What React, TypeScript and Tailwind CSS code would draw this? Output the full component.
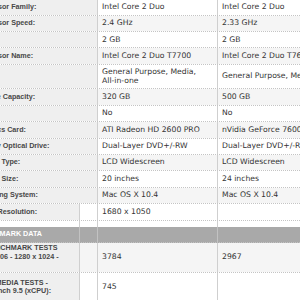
import React from 'react';

// Spec comparison sheet: one label column and two machine columns
interface SpecRow { label: string; a: string; b: string; tall?: boolean; }
interface BenchRow { lines: string[]; a: string; b: string; h: string; shaded?: boolean; }

const specs: SpecRow[] = [
  { label: 'Processor Family:', a: 'Intel Core 2 Duo', b: 'Intel Core 2 Duo' },
  { label: 'Processor Speed:', a: '2.4 GHz', b: '2.33 GHz' },
  { label: 'RAM:', a: '2 GB', b: '2 GB' },
  { label: 'Processor Name:', a: 'Intel Core 2 Duo T7700', b: 'Intel Core 2 Duo T7600' },
  { label: 'Type:', a: 'General Purpose, Media,\nAll-in-one', b: 'General Purpose, Media', tall: true },
  { label: 'Storage Capacity:', a: '320 GB', b: '500 GB' },
  { label: 'SSD:', a: 'No', b: 'No' },
  { label: 'Graphics Card:', a: 'ATI Radeon HD 2600 PRO', b: 'nVidia GeForce 7600 GT' },
  { label: 'Primary Optical Drive:', a: 'Dual-Layer DVD+/-RW', b: 'Dual-Layer DVD+/-RW' },
  { label: 'Display Type:', a: 'LCD Widescreen', b: 'LCD Widescreen' },
  { label: 'Display Size:', a: '20 inches', b: '24 inches' },
  { label: 'Operating System:', a: 'Mac OS X 10.4', b: 'Mac OS X 10.4' },
];

const bench: BenchRow[] = [
  { lines: ['3D BENCHMARK TESTS', '3DMark06 - 1280 x 1024 -', 'Score:'], a: '3784', b: '2967', h: 'h-[30px]', shaded: true },
  { lines: ['MULTIMEDIA TESTS -', 'Cinebench 9.5 (xCPU):'], a: '745', b: '', h: 'h-[30px]' },
];

const label = "font-['Liberation_Sans',Arial,sans-serif] font-bold text-[7.2px] leading-[8.5px] text-[#484848]";
const value = "font-['DejaVu_Sans',Verdana,sans-serif] text-[7.7px] leading-[8.5px] text-[#333]";
const rowLine = 'border-b border-dotted border-[#c4c4c4]';

function Value({ text, shaded, wide }: { text: string; shaded?: boolean; wide?: boolean }) {
  return (
    <div className={`${wide ? 'w-[180px]' : 'w-[120px]'} shrink-0 flex flex-col justify-center pl-[4px] pr-1 border-r border-[#cfcfcf] whitespace-nowrap ${shaded ? 'bg-[#f5f5f5]' : 'bg-white'} ${value}`}>
      {text.split('\n').map((t) => <span key={t}>{t}</span>)}
    </div>
  );
}

export default function App() {
  return (
    <div className="w-[300px] h-[300px] overflow-hidden bg-white">
      <div className="w-[428px] ml-[-30px] mt-[-0.7px]">
        {specs.map((row, i) => (
          <div key={i} className={`flex ${row.tall ? 'h-[24.6px]' : 'h-[16.4px]'} ${rowLine}`}>
            <div className={`w-[128px] shrink-0 flex items-center pl-[4px] bg-[#efefef] border-r border-[#cfcfcf] whitespace-nowrap overflow-hidden ${label}`}>
              {row.label}
            </div>
            <Value text={row.a} shaded={i % 2 === 1} />
            <Value text={row.b} shaded={i % 2 === 1} wide />
          </div>
        ))}

        {/* resolution row starts the split label column */}
        <div className={`flex h-[16.4px] ${rowLine}`}>
          <div className={`w-[110px] shrink-0 flex items-center pl-[4px] bg-[#efefef] border-r border-[#cfcfcf] whitespace-nowrap ${label}`}>
            Native Resolution:
          </div>
          <div className="w-[18px] shrink-0 bg-white border-r border-[#cfcfcf]" />
          <Value text="1680 x 1050" />
          <Value text="" wide />
        </div>

        <div className="flex h-[6px]">
          <div className="w-[110px] shrink-0 border-r border-[#cfcfcf]" />
          <div className="w-[18px] shrink-0 border-r border-[#cfcfcf]" />
          <div className="w-[120px] shrink-0 border-r border-[#cfcfcf]" />
        </div>

        <div className={`flex h-[16px] bg-[#a9a9a9] ${rowLine}`}>
          <div className={`w-[110px] shrink-0 flex items-center pl-[4px] border-r border-[#c2c2c2] whitespace-nowrap ${label} text-white`}>
            BENCHMARK DATA
          </div>
          <div className="w-[18px] shrink-0 border-r border-[#c2c2c2]" />
          <div className="w-[120px] shrink-0 border-r border-[#c2c2c2]" />
        </div>

        {bench.map((row, i) => (
          <div key={i} className={`flex ${row.h} ${rowLine}`}>
            <div className={`w-[110px] shrink-0 flex flex-col justify-center pl-[4px] bg-[#efefef] border-r border-[#cfcfcf] whitespace-nowrap ${label}`}>
              {row.lines.map((l) => <span key={l}>{l}</span>)}
            </div>
            <div className={`w-[18px] shrink-0 border-r border-[#cfcfcf] ${row.shaded ? 'bg-[#f5f5f5]' : 'bg-white'}`} />
            <Value text={row.a} shaded={row.shaded} />
            <Value text={row.b} shaded={row.shaded} wide />
          </div>
        ))}
      </div>
    </div>
  );
}
